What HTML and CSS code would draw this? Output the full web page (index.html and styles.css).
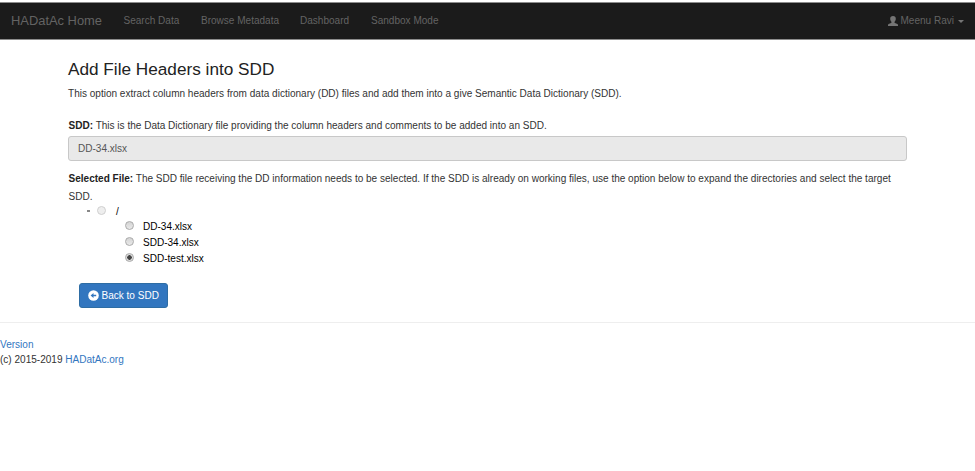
FILE: index.html
```html
<!DOCTYPE html>
<html lang="en">
<head>
<meta charset="utf-8">
<title>Add File Headers into SDD</title>
<link rel="stylesheet" href="styles.css">
</head>
<body>
<nav class="navbar">
  <a class="brand">HADatAc Home</a>
  <a class="nav-link search">Search Data</a>
  <a class="nav-link browse">Browse Metadata</a>
  <a class="nav-link dash">Dashboard</a>
  <a class="nav-link">Sandbox Mode</a>
  <a class="user">
    <svg class="user-icon" viewBox="0 0 10 10"><path d="M5 0C3.100 0 2.200 1 2.200 2.700c0 1.400.6 2.400 1.200 3 .3.600.1 1-.4 1.200L.6 7.900C.2 8.100 0 8.500 0 9v1h10V9c0-.5-.2-.9-.6-1.100L7 6.900c-.5-.2-.7-.6-.4-1.200.6-.6 1.200-1.600 1.200-3C7.800 1 6.900 0 5 0z"/></svg>
    <span class="user-name">Meenu Ravi</span>
    <span class="caret"></span>
  </a>
</nav>
<main class="container">
  <h3>Add File Headers into SDD</h3>
  <p class="intro">This option extract column headers from data dictionary (DD) files and add them into a give Semantic Data Dictionary (SDD).</p>
  <p class="label label-sdd"><b>SDD:</b> This is the Data Dictionary file providing the column headers and comments to be added into an SDD.</p>
  <div class="field">DD-34.xlsx</div>
  <p class="label label-file"><b>Selected File:</b> The SDD file receiving the DD information needs to be selected. If the SDD is already on working files, use the option below to expand the directories and select the target<br>SDD.</p>
  <div class="root"><span class="dash-mark"></span><span class="radio disabled"></span><span class="slash">/</span></div>
  <ul class="files">
    <li><span class="radio"></span><span class="file-name">DD-34.xlsx</span></li>
    <li><span class="radio"></span><span class="file-name">SDD-34.xlsx</span></li>
    <li><span class="radio checked"></span><span class="file-name">SDD-test.xlsx</span></li>
  </ul>
  <a class="button">
    <svg class="back-icon" viewBox="0 0 11 11"><circle cx="5.500" cy="5.500" r="5.300" fill="#fff"/><path d="M2.600 5.500L5.500 3v1.700h2.700v1.600H5.500V8z" fill="#3276bf"/></svg>
    <span>Back to SDD</span>
  </a>
</main>
<footer class="footer">
  <div><a>Version</a></div>
  <div>(c) 2015-2019 <a>HADatAc.org</a></div>
</footer>
</body>
</html>
```
FILE: styles.css
```css
* { box-sizing: border-box; }
body {
  margin: 0;
  padding-top: 2px;
  background: #fff;
  color: #333;
  font: 10.040px/14px "Liberation Sans", Arial, sans-serif;
}
p, h3, ul { margin: 0; padding: 0; }
.navbar {
  display: flex;
  align-items: center;
  height: 38px;
  padding: 0 11px;
  background: #1b1b1b;
  border-top: 1px solid #8d8d8d;
  border-bottom: 1px solid #8d8d8d;
  color: #636363;
}
.brand { width: 112.500px; font-size: 12.900px; line-height: 18px; }
.nav-link { line-height: 14px; }
.search { width: 77.500px; }
.browse { width: 99px; }
.dash { width: 71px; }
.user { display: flex; align-items: center; margin-left: auto; }
.user-icon { width: 10px; height: 10px; margin-right: 2.500px; fill: #757575; }
.caret {
  margin-left: 4px;
  border: 3px solid transparent;
  border-top-color: #757575;
  border-bottom: 0;
}
.container { width: 839px; margin-left: 68px; padding-top: 19px; }
h3 { font-size: 17.200px; line-height: 20px; font-weight: 400; color: #222; }
.intro { margin-top: 8px; }
.label { white-space: nowrap; padding-left: .5px; }
.label b { color: #222; }
.label-sdd { margin-top: 18px; }
.field {
  height: 25px;
  margin-top: 3px;
  padding: 1px 9px 0;
  border: 1px solid #c8c8c8;
  border-radius: 3px;
  background: #e9e9e9;
  color: #555;
  line-height: 22px;
}
.label-file { margin-top: 9px; line-height: 18px; }
.root { display: flex; align-items: center; height: 13px; margin-top: -2px; padding-left: 19px; }
.radio {
  flex: none;
  width: 9px;
  height: 9px;
  border: 1px solid #aaa;
  border-radius: 50%;
  background: linear-gradient(#d4d4d4, #e9e9e9);
}
.disabled { margin: 0 10px 0 7px; border-color: #d0d0d0; background: #eee; }
.dash-mark { width: 3px; height: 2px; background: #888; }
.slash { padding-top: 2px; color: #000; }
.files { margin-top: 1px; padding-left: 57px; list-style: none; color: #000; }
.files li { display: flex; align-items: center; height: 16px; }
.files .radio { margin: 0 9px 1px 0; }
.file-name { padding-top: 2px; }
.checked { background: radial-gradient(circle, #444 0 2px, #ddd 2.500px); }
.button {
  display: flex;
  align-items: center;
  width: 89px;
  height: 25px;
  margin: 17px 0 0 11px;
  padding-left: 8px;
  border: 1px solid #2e6da4;
  border-radius: 3px;
  background: #3276bf;
  color: #fff;
}
.back-icon { width: 11px; height: 11px; margin: 0 2.500px 1px 0; }
.footer { margin-top: 14px; padding-top: 14px; border-top: 1px solid #eee; line-height: 15px; }
.footer a { color: #3276bf; }
```
